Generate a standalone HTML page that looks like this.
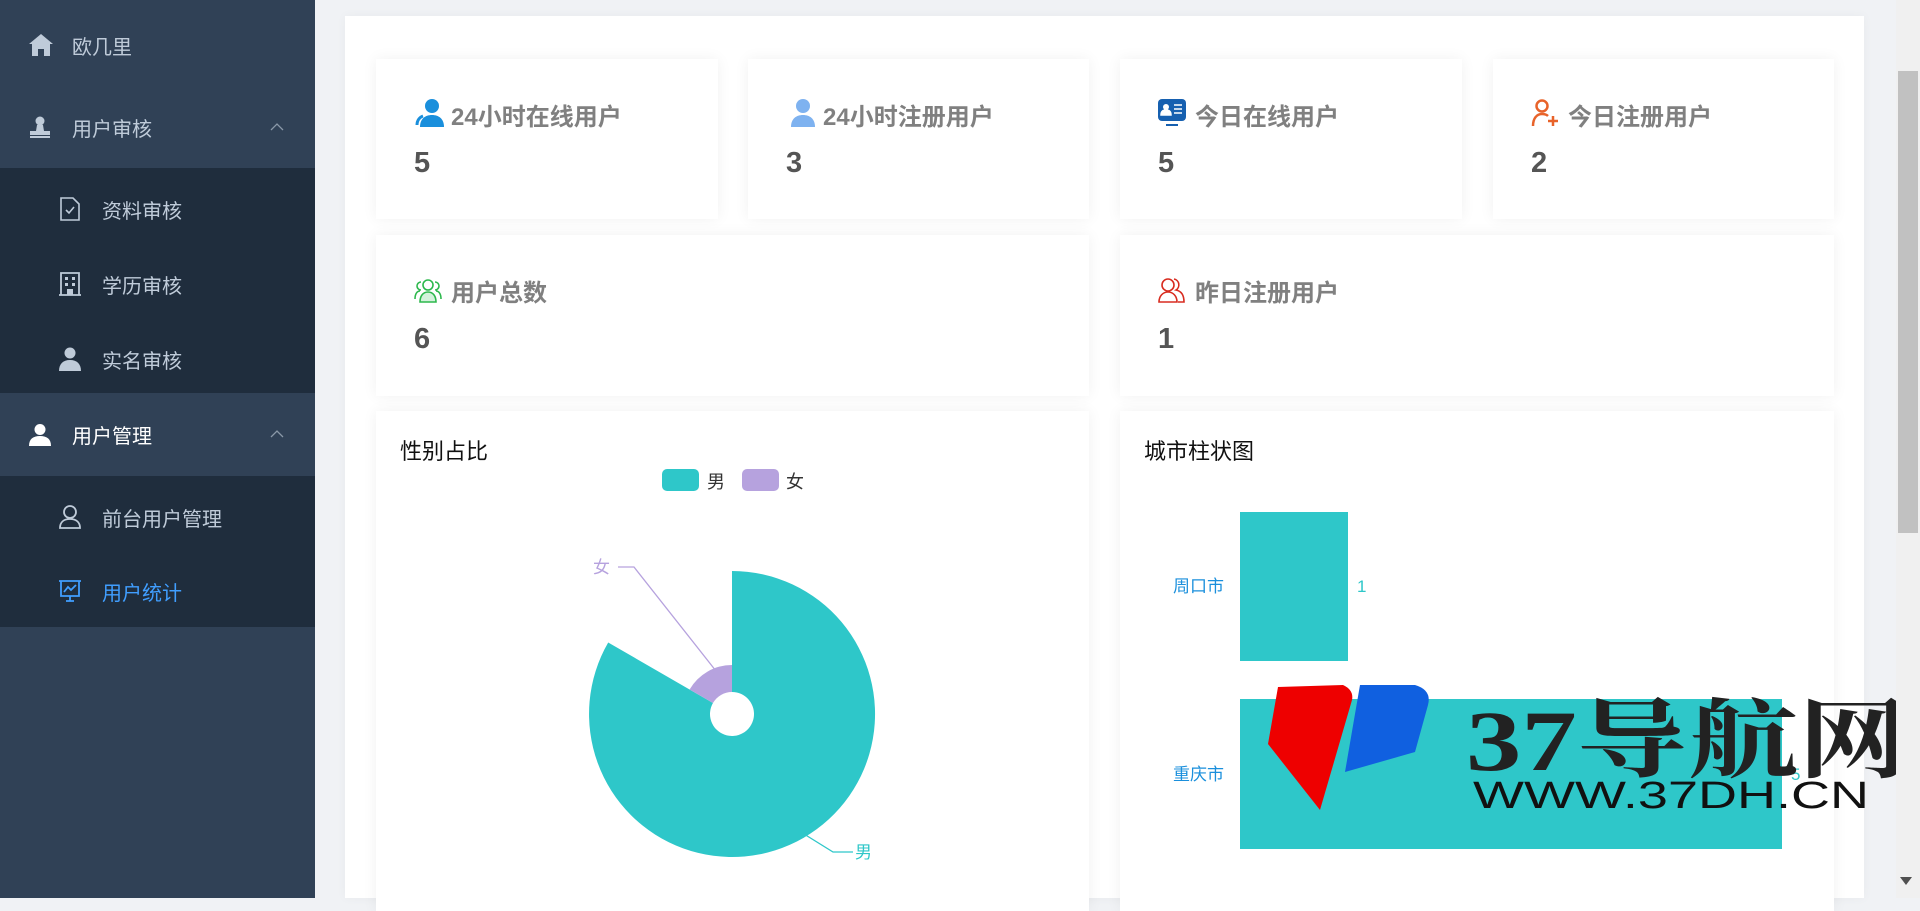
<!DOCTYPE html>
<html><head><meta charset="utf-8">
<style>
*{margin:0;padding:0;box-sizing:border-box}
body{width:1920px;height:898px;overflow:hidden;background:#f0f2f5;font-family:"Liberation Sans","Noto Sans CJK SC",sans-serif;position:relative}
.side{position:absolute;left:0;top:0;width:315px;height:898px;background:#304156}
.row{position:absolute;left:0;width:315px;color:#bfcbd9;font-size:20px;display:flex;align-items:center}
.sub{background:#1f2d3d}
.row svg{position:absolute}
.row span{position:absolute}
.panel{position:absolute;left:345px;top:16px;width:1519px;height:882px;background:#fff;box-shadow:0 0 10px rgba(0,0,0,.04)}
.card{position:absolute;background:#fff;box-shadow:0 0 14px rgba(0,0,0,.06)}
.card .t{position:absolute;left:75px;top:38px;font-size:24px;font-weight:bold;color:#808080}
.card .n{position:absolute;left:38px;top:88px;font-size:29px;font-weight:bold;color:#555}
.card svg.i{position:absolute;left:38px;top:40px}
.scroll{position:absolute;left:1896px;top:0;width:24px;height:898px;background:#f0f0f0}
.thumb{position:absolute;left:1898px;top:71px;width:20px;height:462px;background:#c1c1c1}
</style></head><body>
<div class="side"></div>
<div class="row" style="top:16px;height:58px">
<svg style="left:29px;top:18px" width="24" height="22" viewBox="0 0 24 22"><path d="M12 0L0 10h3v12h6v-7h6v7h6V10h3z" fill="#bfcbd9"/></svg>
<span style="left:72px">欧几里</span></div>
<div class="row" style="top:86px;height:82px">
<svg style="left:29px;top:30px" width="22" height="22" viewBox="0 0 22 22"><circle cx="11" cy="5" r="4.5" fill="#bfcbd9"/><path d="M8 9h6l1 6h6v4H1v-4h6z M1 20h20v2H1z" fill="#bfcbd9"/></svg>
<span style="left:72px">用户审核</span>
<svg style="left:270px;top:36px" width="14" height="9" viewBox="0 0 14 9"><path d="M1 8L7 2l6 6" stroke="#8a98a8" fill="none" stroke-width="1.3"/></svg></div>
<div class="row sub" style="top:168px;height:225px"></div>
<div class="row" style="top:180px;height:58px"><svg style="left:60px;top:17px" width="20" height="24" viewBox="0 0 20 24"><path d="M1 1h12l6 6v16H1z" stroke="#bfcbd9" fill="none" stroke-width="1.6"/><path d="M6 13l3 3 5-6" stroke="#bfcbd9" fill="none" stroke-width="1.6"/></svg><span style="left:102px">资料审核</span></div>
<div class="row" style="top:255px;height:58px"><svg style="left:59px;top:17px" width="22" height="24" viewBox="0 0 22 24"><path d="M2 1h18v22H2z M0 23h22" stroke="#bfcbd9" fill="none" stroke-width="1.8"/><rect x="6" y="5" width="3" height="3" fill="#bfcbd9"/><rect x="13" y="5" width="3" height="3" fill="#bfcbd9"/><rect x="6" y="11" width="3" height="3" fill="#bfcbd9"/><rect x="13" y="11" width="3" height="3" fill="#bfcbd9"/><rect x="8" y="17" width="6" height="6" fill="#bfcbd9"/></svg><span style="left:102px">学历审核</span></div>
<div class="row" style="top:330px;height:58px"><svg style="left:59px;top:17px" width="22" height="24" viewBox="0 0 22 24"><circle cx="11" cy="6" r="5.5" fill="#bfcbd9"/><path d="M0 24c0-7 4-11 11-11s11 4 11 11z" fill="#bfcbd9"/></svg><span style="left:102px">实名审核</span></div>
<div class="row" style="top:393px;height:83px"><svg style="left:29px;top:31px" width="22" height="22" viewBox="0 0 22 22"><circle cx="11" cy="5.5" r="5.5" fill="#fff"/><path d="M0 22c0-7 4-10 11-10s11 3 11 10z" fill="#fff"/></svg><span style="left:72px;color:#fff">用户管理</span>
<svg style="left:270px;top:36px" width="14" height="9" viewBox="0 0 14 9"><path d="M1 8L7 2l6 6" stroke="#8a98a8" fill="none" stroke-width="1.3"/></svg></div>
<div class="row sub" style="top:476px;height:151px"></div>
<div class="row" style="top:488px;height:58px"><svg style="left:59px;top:17px" width="22" height="24" viewBox="0 0 22 24"><circle cx="11" cy="7" r="6" stroke="#bfcbd9" fill="none" stroke-width="1.8"/><path d="M1 23c0-6 4-9 10-9s10 3 10 9z" stroke="#bfcbd9" fill="none" stroke-width="1.8"/></svg><span style="left:102px">前台用户管理</span></div>
<div class="row" style="top:562px;height:58px"><svg style="left:58px;top:18px" width="24" height="22" viewBox="0 0 24 22"><path d="M1 1h22M3 1v15h18V1M12 16v5M8 21h8M6 12l4-5 3 3 5-5" stroke="#409eff" fill="none" stroke-width="1.8"/></svg><span style="left:102px;color:#409eff">用户统计</span></div>

<div class="panel"></div>
<div class="card" style="left:376px;top:59px;width:342px;height:160px"><svg class="i" width="30" height="28" viewBox="0 0 30 28"><circle cx="18" cy="7" r="7" fill="#1a8fdc"/><path d="M6 28c0-8 5-12 12-12s12 4 12 12z" fill="#1a8fdc"/><path d="M3 26c0-5 3-8 6-9" stroke="#1a8fdc" stroke-width="3" fill="none"/></svg><div class="t">24小时在线用户</div><div class="n">5</div></div>
<div class="card" style="left:748px;top:59px;width:341px;height:160px"><svg class="i" width="26" height="28" viewBox="0 0 26 28" style="left:42px"><circle cx="13" cy="7" r="7" fill="#7eb2f0"/><path d="M1 28c0-8 5-12 12-12s12 4 12 12z" fill="#7eb2f0"/></svg><div class="t">24小时注册用户</div><div class="n">3</div></div>
<div class="card" style="left:1120px;top:59px;width:342px;height:160px"><svg class="i" width="28" height="28" viewBox="0 0 28 28"><rect x="0" y="0" width="28" height="22" rx="4" fill="#1660b0"/><circle cx="8" cy="8" r="3" fill="#fff"/><path d="M3 16c0-4 2-5 5-5s5 1 5 5z M16 6h8M16 10h8M16 14h8" fill="#fff" stroke="#fff" stroke-width="1.5"/><rect x="8" y="25" width="12" height="2" fill="#1660b0"/></svg><div class="t">今日在线用户</div><div class="n">5</div></div>
<div class="card" style="left:1493px;top:59px;width:341px;height:160px"><svg class="i" width="28" height="28" viewBox="0 0 28 28"><circle cx="11" cy="7" r="5.5" stroke="#e8632a" stroke-width="2.5" fill="none"/><path d="M2 27c0-8 4-12 9-12 3 0 5 1 6 2" stroke="#e8632a" stroke-width="2.5" fill="none"/><path d="M17 22h10M22 17v10" stroke="#e8632a" stroke-width="2.5"/></svg><div class="t">今日注册用户</div><div class="n">2</div></div>
<div class="card" style="left:376px;top:235px;width:713px;height:161px"><svg class="i" width="28" height="26" viewBox="0 0 28 26" style="top:42px"><path d="M6 25c0-6 3-10 8-10s8 4 8 10z" fill="#d4f2dc" stroke="#2db84d" stroke-width="1.6"/><circle cx="14" cy="8" r="5" fill="#fff" stroke="#2db84d" stroke-width="1.6"/><path d="M7 5a4 4 0 0 0 0 8M1 22c0-5 2-8 5-8M21 5a4 4 0 0 1 0 8M27 22c0-5-2-8-5-8" stroke="#2db84d" stroke-width="1.6" fill="none"/></svg><div class="t">用户总数</div><div class="n">6</div></div>
<div class="card" style="left:1120px;top:235px;width:714px;height:161px"><svg class="i" width="28" height="26" viewBox="0 0 28 26" style="top:42px"><circle cx="10" cy="8" r="6" stroke="#d82c20" stroke-width="1.6" fill="none"/><path d="M1 25c0-6 4-10 9-10s9 4 9 10z" stroke="#d82c20" stroke-width="1.6" fill="none"/><path d="M16 2a6 6 0 0 1 2 11c5 1 8 5 8 12h-6" stroke="#d82c20" stroke-width="1.6" fill="none"/></svg><div class="t">昨日注册用户</div><div class="n">1</div></div>

<div class="card" style="left:376px;top:411px;width:713px;height:500px"></div>
<div class="card" style="left:1120px;top:411px;width:714px;height:500px"></div>

<svg style="position:absolute;left:0;top:0" width="1920" height="898">
<text x="400" y="459" font-size="22" fill="#111" font-family="Liberation Sans,Noto Sans CJK SC,sans-serif">性别占比</text>
<rect x="662" y="469" width="37" height="22" rx="5" fill="#2ec7c9"/>
<text x="707" y="488" font-size="18" fill="#333" font-family="Liberation Sans,Noto Sans CJK SC,sans-serif">男</text>
<rect x="742" y="469" width="37" height="22" rx="5" fill="#b6a2de"/>
<text x="786" y="488" font-size="18" fill="#333" font-family="Liberation Sans,Noto Sans CJK SC,sans-serif">女</text>
<path d="M732,571 A143,143 0 1 1 608.2,642.5 L712.95,703 A22,22 0 1 0 732,692 Z" fill="#2ec7c9"/>
<path d="M689.6,689.5 A49,49 0 0 1 732,665 L732,692 A22,22 0 0 0 712.95,703 Z" fill="#b6a2de"/>
<path d="M716,671 L634,567 L618,567" stroke="#b6a2de" fill="none" stroke-width="1.3"/>
<text x="593" y="573" font-size="17" fill="#b6a2de" font-family="Liberation Sans,Noto Sans CJK SC,sans-serif">女</text>
<path d="M804,834 L833,852 L853,852" stroke="#2ec7c9" fill="none" stroke-width="1.3"/>
<text x="855" y="858" font-size="17" fill="#2ec7c9" font-family="Liberation Sans,Noto Sans CJK SC,sans-serif">男</text>

<text x="1144" y="459" font-size="22" fill="#111" font-family="Liberation Sans,Noto Sans CJK SC,sans-serif">城市柱状图</text>
<rect x="1240" y="512" width="108" height="149" fill="#2ec7c9"/>
<rect x="1240" y="699" width="542" height="150" fill="#2ec7c9"/>
<text x="1173" y="592" font-size="17" fill="#1a8fdc" font-family="Liberation Sans,Noto Sans CJK SC,sans-serif">周口市</text>
<text x="1173" y="780" font-size="17" fill="#1a8fdc" font-family="Liberation Sans,Noto Sans CJK SC,sans-serif">重庆市</text>
<text x="1357" y="592" font-size="17" fill="#2ec7c9" font-family="Liberation Sans,sans-serif">1</text>
<text x="1791" y="780" font-size="17" fill="#2ec7c9" font-family="Liberation Sans,sans-serif">5</text>
<path d="M1278,687 L1343,685 Q1354,690 1352,700 L1320,810 L1268,744 Z" fill="#ee0000"/>
<path d="M1360,685 L1415,685 Q1432,690 1428,705 L1415,752 L1345,772 Z" fill="#1060e0"/>
<text x="1466" y="770" font-size="86" font-weight="bold" fill="#222" font-family="Liberation Serif,Noto Serif CJK SC,serif" textLength="443" lengthAdjust="spacingAndGlyphs">37导航网</text>
<text x="1473" y="808" font-size="38" fill="#111" font-family="Liberation Sans,sans-serif" textLength="396" lengthAdjust="spacingAndGlyphs">WWW.37DH.CN</text>
</svg>
<div class="scroll"></div><div class="thumb"></div>
<svg style="position:absolute;left:1899px;top:876px" width="14" height="10"><path d="M1 1h12L7 9z" fill="#505050"/></svg>
</body></html>
